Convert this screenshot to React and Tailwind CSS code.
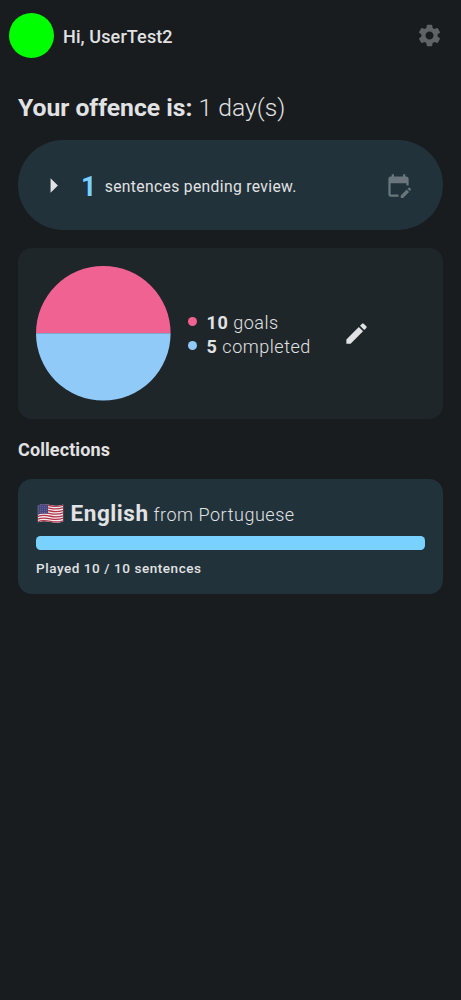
import { MdSettings, MdEdit, MdArrowRight, MdEditCalendar } from "react-icons/md";

// Wavy stripes follow the same curve, shifted down one stripe at a time.
const stripes = [0, 1, 2, 3, 4, 5, 6];

function UsFlag() {
  return (
    <svg viewBox="0 0 26 19" className="mr-[7px] ml-[0.5px] h-[19px] w-[27px] shrink-0" aria-label="United States">
      <clipPath id="flag">
        <path d="M0 1.4C5 -.5 9 .2 13 1.1S21 2 26 .4V17.4C21 19.2 17 18.8 13 17.9S5 16.6 0 18.4Z" />
      </clipPath>
      <g clipPath="url(#flag)">
        <rect width="26" height="19" fill="#eeeeee" />
        {stripes.map((i) => (
          <path
            key={i}
            transform={`translate(0 ${i * 2.62})`}
            d="M0 2.05C5 .15 9 .85 13 1.75S21 2.65 26 1.05"
            fill="none"
            stroke="#b8324a"
            strokeWidth="1.35"
          />
        ))}
        <path d="M0 0H10.5V9.6C7 9.2 3 9.5 0 10.8Z" fill="#46467f" />
        <g fill="#aaaacb">
          {[2.2, 4.2, 6.2, 8.2].map((y) =>
            [1.2, 3.2, 5.2, 7.2, 9.2].map((x) => <circle key={`${x}-${y}`} cx={x} cy={y} r=".4" />)
          )}
        </g>
      </g>
    </svg>
  );
}

function Header() {
  return (
    <header className="flex h-[71.8px] items-center pr-[18px] pl-[9px]">
      <div className="size-[45px] shrink-0 rounded-full bg-[#00ff00]" />
      <span className="ml-[9px] flex-1 pt-px text-[18px] leading-[27px] font-medium tracking-[0.12px]">Hi, UserTest2</span>
      <MdSettings className="size-[27px] text-[#5f6365]" />
    </header>
  );
}

function PendingReview() {
  return (
    <section className="mt-[15.8px] flex h-[89.8px] items-center rounded-full bg-[#21323b] pr-[31px] pl-[18px]">
      <MdArrowRight className="size-[35px]" />
      <span className="ml-[10px] pt-[4px] text-[27px] leading-[31px] font-bold text-[#78d1ff]">1</span>
      <span className="ml-[8.3px] flex-1 pt-[3.6px] text-[15.7px] leading-[22px] tracking-[0.33px]">sentences pending review.</span>
      <MdEditCalendar className="size-[27px] text-[#6a767b]" />
    </section>
  );
}

function Goals() {
  return (
    <section className="mt-[18px] flex h-[170.3px] items-center rounded-[14px] bg-[#1f2629] px-[18px]">
      <svg viewBox="0 0 135 135" className="size-[134.6px] shrink-0">
        <path d="M0 67.5A67.5 67.5 0 0 1 135 67.5Z" fill="#f06292" />
        <path d="M0 67.5A67.5 67.5 0 0 0 135 67.5Z" fill="#90caf9" />
      </svg>
      <ul className="ml-[17.6px] w-[123px] pt-[3px] text-[18px] leading-6 font-light tracking-[0.53px]">
        <li className="flex items-center whitespace-nowrap">
          <span className="mr-[9.4px] mb-[3px] size-[9px] shrink-0 rounded-full bg-[#f06292]" />
          <span><b className="font-bold">10</b> goals</span>
        </li>
        <li className="flex items-center whitespace-nowrap">
          <span className="mr-[9.4px] mb-[3px] size-[9px] shrink-0 rounded-full bg-[#90caf9]" />
          <span><b className="font-bold">5</b> completed</span>
        </li>
      </ul>
      <MdEdit className="ml-[31.6px] size-[27px]" />
    </section>
  );
}

function Collection() {
  return (
    <section className="mt-[17.3px] h-[115px] rounded-[14px] bg-[#21323b] px-[18px] pt-[18px]">
      <div className="flex h-[32px] items-center">
        <UsFlag />
        <p className="pt-[2px] text-[22.5px] leading-[32px] font-bold tracking-[0.56px] whitespace-nowrap">
          English<span className="text-[18px] font-light tracking-[0.53px]"> from Portuguese</span>
        </p>
      </div>
      <div className="mt-[7px] h-[13.5px] rounded-[4.5px] bg-[#78d1ff]" />
      <p className="mt-[8px] text-[13.5px] leading-[20px] font-medium tracking-[0.56px]">Played 10 / 10 sentences</p>
    </section>
  );
}

export default function App() {
  return (
    <div className="min-h-screen bg-[#191c1e] font-[Roboto,sans-serif] text-[#e1e2e4]">
      <Header />
      <main className="px-[18px] pt-[18.9px]">
        <h1 className="text-[24.7px] leading-[34px] font-bold">
          Your offence is: <span className="font-light">1 day(s)</span>
        </h1>
        <PendingReview />
        <Goals />
        <h2 className="mt-[18.2px] text-[18px] leading-[25px] font-bold tracking-[0.1px]">Collections</h2>
        <Collection />
      </main>
    </div>
  );
}
